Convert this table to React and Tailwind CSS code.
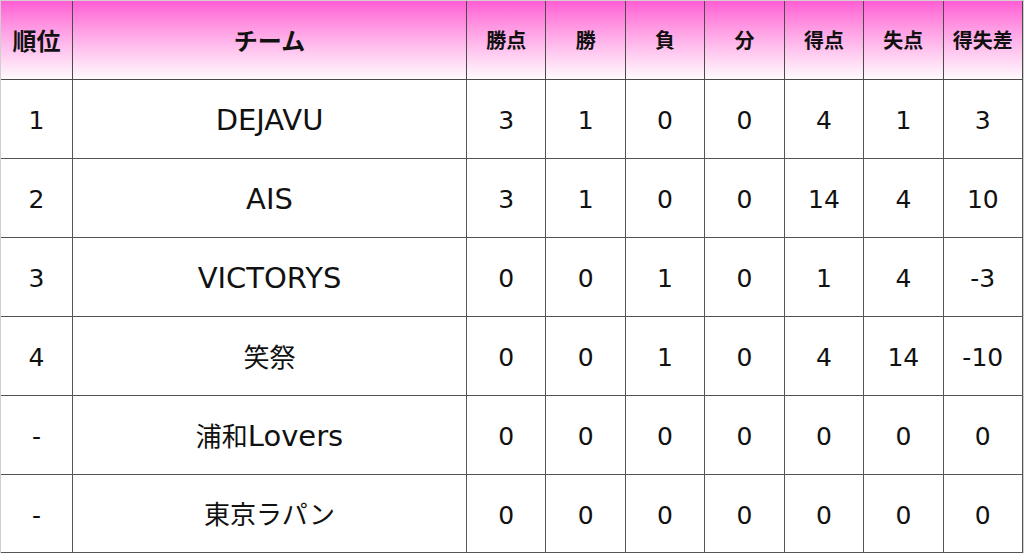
import React from "react";

const rows = [
  { rank: "1", team: "DEJAVU", pts: 3, w: 1, l: 0, d: 0, gf: 4, ga: 1, diff: "3" },
  { rank: "2", team: "AIS", pts: 3, w: 1, l: 0, d: 0, gf: 14, ga: 4, diff: "10" },
  { rank: "3", team: "VICTORYS", pts: 0, w: 0, l: 1, d: 0, gf: 1, ga: 4, diff: "-3" },
  { rank: "4", team: "笑祭", pts: 0, w: 0, l: 1, d: 0, gf: 4, ga: 14, diff: "-10" },
  { rank: "-", team: "浦和Lovers", pts: 0, w: 0, l: 0, d: 0, gf: 0, ga: 0, diff: "0" },
  { rank: "-", team: "東京ラパン", pts: 0, w: 0, l: 0, d: 0, gf: 0, ga: 0, diff: "0" },
];

const stats = ["勝点", "勝", "負", "分", "得点", "失点", "得失差"];

// latin runs render a bit larger than the kana/kanji ones
function TeamName({ name }) {
  const parts = name.match(/[A-Za-z0-9]+|[^A-Za-z0-9]+/g) || [];
  return (
    <span>
      {parts.map((p, i) =>
        /^[A-Za-z0-9]+$/.test(p) ? (
          <span key={i} className="text-[29px]">{p}</span>
        ) : (
          <span key={i} className="text-[26px]">{p}</span>
        )
      )}
    </span>
  );
}

export default function App() {
  return (
    <div className="w-[1024px] h-[553px] overflow-hidden bg-white border-t border-l border-r border-[#cfcfcf] text-[#111] font-['DejaVu_Sans','Noto_Sans_CJK_JP',sans-serif]">
      <div className="grid grid-cols-[72px_394px_repeat(7,1fr)]">
        {/* header */}
        <div className="h-[79px] flex items-center justify-center border-r border-b border-[#4a4a4a] bg-gradient-to-b from-[#ff5cd4] to-[#fffafd] font-bold text-[24px] font-['Noto_Sans_CJK_JP',sans-serif]">
          順位
        </div>
        <div className="h-[79px] flex items-center justify-center border-r border-b border-[#4a4a4a] bg-gradient-to-b from-[#ff5cd4] to-[#fffafd] font-bold text-[24px] font-['Noto_Sans_CJK_JP',sans-serif]">
          チーム
        </div>
        {stats.map((s) => (
          <div
            key={s}
            className="h-[79px] flex items-center justify-center border-r border-b border-[#4a4a4a] bg-gradient-to-b from-[#ff5cd4] to-[#fffafd] font-bold text-[20px] font-['Noto_Sans_CJK_JP',sans-serif]"
          >
            {s}
          </div>
        ))}

        {/* body */}
        {rows.map((r, i) => {
          const h = i === rows.length - 1 ? "h-[78px]" : "h-[79px]";
          return (
            <React.Fragment key={i}>
              <div className={`${h} flex items-center justify-center pt-[4px] border-r border-b border-[#555] text-[25px]`}>
                {r.rank}
              </div>
              <div className={`${h} flex items-center justify-center pt-[4px] border-r border-b border-[#555]`}>
                <TeamName name={r.team} />
              </div>
              {[r.pts, r.w, r.l, r.d, r.gf, r.ga, r.diff].map((v, j) => (
                <div
                  key={j}
                  className={`${h} flex items-center justify-center pt-[4px] border-r border-b border-[#555] text-[25px]`}
                >
                  {v}
                </div>
              ))}
            </React.Fragment>
          );
        })}
      </div>
    </div>
  );
}
